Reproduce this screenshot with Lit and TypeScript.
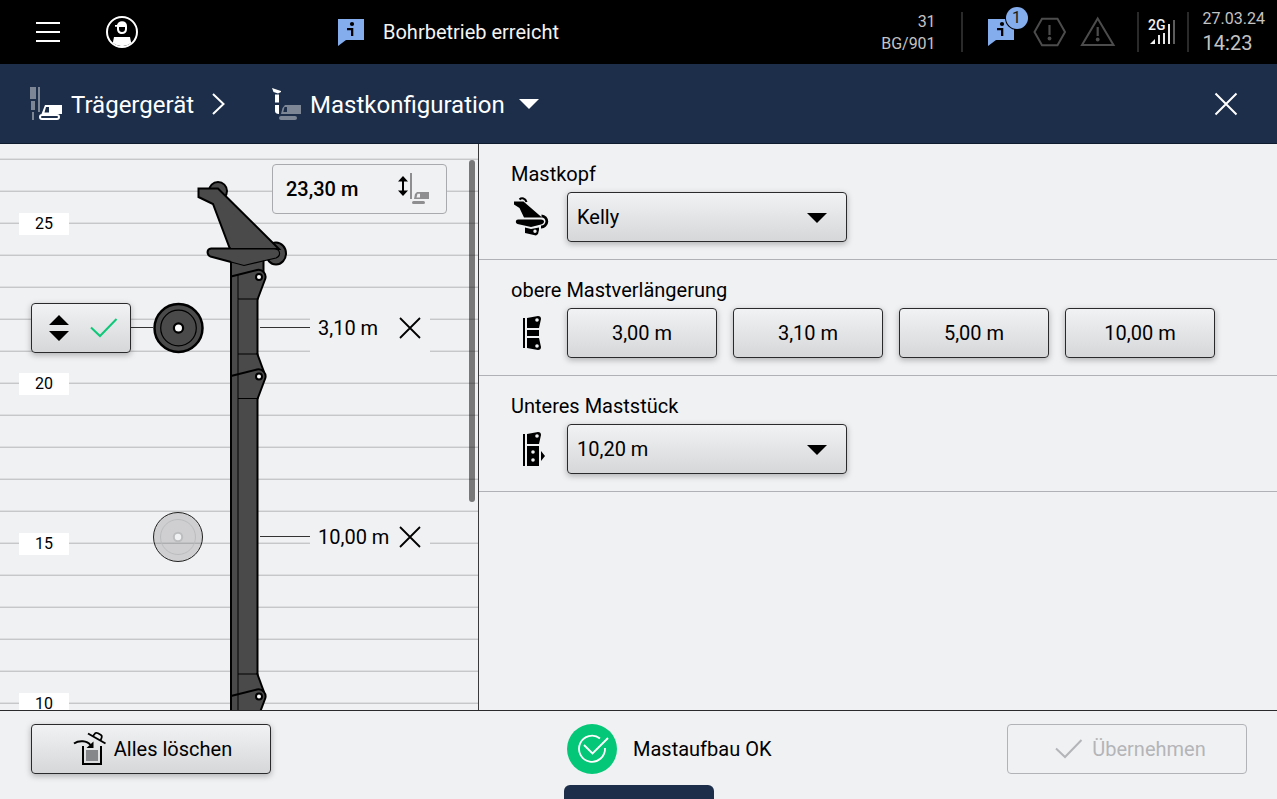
import { LitElement, html, svg, css } from "lit";
import { customElement, property, state } from "lit/decorators.js";

const buttonStyles = css`
  * {
    box-sizing: border-box;
  }
  svg {
    display: block;
    flex: none;
    overflow: visible;
  }
  button,
  select {
    font: inherit;
    color: inherit;
    margin: 0;
    padding: 0;
  }
  .plain {
    background: none;
    border: 0;
    cursor: pointer;
    display: flex;
    align-items: center;
  }
  .key {
    height: 50px;
    border: 1px solid #2a2a2c;
    border-radius: 4px;
    background: linear-gradient(#f1f2f4, #d6d7d9);
    box-shadow: 0 2px 6px rgba(0, 0, 0, 0.28);
    color: #000;
    font-size: 20px;
    cursor: pointer;
  }
`;

/* Status bar across the top of the terminal. */
@customElement("status-bar")
export class StatusBar extends LitElement {
  static styles = [
    buttonStyles,
    css`
      :host {
        display: flex;
        align-items: center;
        height: 64px;
        background: #000;
        color: #f4f4f4;
      }
      .tools {
        display: flex;
        align-items: center;
        gap: 46px;
        flex: 0 0 338px;
        padding-left: 36px;
      }
      .message {
        display: flex;
        align-items: center;
        gap: 19px;
        font-size: 20px;
        flex: 1;
        white-space: nowrap;
      }
      .right {
        display: flex;
        align-items: center;
        color: #c4c4c4;
      }
      .machine {
        font-size: 16px;
        line-height: 22px;
        text-align: right;
        padding: 2px 25px 0 0;
      }
      .rule {
        width: 2px;
        height: 40px;
        background: #2a2a2a;
      }
      .alerts {
        display: flex;
        align-items: center;
        gap: 16px;
        padding: 0 21px 0 25px;
      }
      .info {
        position: relative;
      }
      .badge {
        position: absolute;
        right: -12px;
        top: -12px;
        width: 22px;
        height: 22px;
        border-radius: 11px;
        background: #84adee;
        box-shadow: 0 0 0 1px #000;
        color: #1a1a1a;
        font-size: 16px;
        line-height: 22px;
        text-align: center;
      }
      .signal {
        padding: 0 11px 0 9px;
      }
      .clock {
        padding: 0 12px 0 14px;
        font-size: 16px;
        line-height: 24px;
      }
      .time {
        font-size: 20px;
      }
      .net {
        font-size: 14px;
        font-weight: 500;
      }
    `,
  ];

  private infoShape(fill: string) {
    return svg`
      <path d="M0 0H26V21H8L0 27Z" fill=${fill}/>
      <circle cx="14" cy="5" r="2.1" fill="#000"/>
      <path d="M9 9H15.300V17H13V11.200H9Z" fill="#000"/>`;
  }

  render() {
    return html`
      <div class="tools">
        <button class="plain" aria-label="Menü">
          <svg width="24" height="20" viewBox="0 0 24 20">
            <path d="M0 1H24M0 10H24M0 19H24" stroke="#fff" stroke-width="2" />
          </svg>
        </button>
        <button class="plain" aria-label="Benutzer">
          <svg width="32" height="32" viewBox="0 0 32 32">
            <circle cx="16" cy="16" r="15" fill="none" stroke="#fff" stroke-width="2" />
            <path d="M8 21H24L25.2 27A15 15 0 0 1 6.8 27Z" fill="#fff" />
            <path
              d="M9 9H11C11.5 6.5 13.500 5.200 16 5.200C19 5.200 21 7 21 10V13C21 16.200 19 18 16 18C13 18 11 16 11 13V10.800H9Z"
              fill="#fff"
            />
            <path d="M13 11H19V13C19 15 17.800 16 16 16S13 15 13 13Z" fill="#000" />
          </svg>
        </button>
      </div>
      <div class="message">
        <svg width="26" height="27" viewBox="0 0 26 27">${this.infoShape("#84adee")}</svg>
        <span>Bohrbetrieb erreicht</span>
      </div>
      <div class="right">
        <div class="machine">31<br />BG/901</div>
        <div class="rule"></div>
        <div class="alerts">
          <div class="info">
            <svg width="28" height="27" viewBox="0 0 28 27">${this.infoShape("#84adee")}</svg>
            <span class="badge">1</span>
          </div>
          <svg width="32" height="32" viewBox="1032 16 32 32">
            <path
              d="M1042 18.700H1057.500L1065 32L1057.500 45.300H1042L1034.500 32Z"
              fill="none"
              stroke="#4c4c4c"
              stroke-width="2"
            />
            <path d="M1049.500 25V35" stroke="#4c4c4c" stroke-width="2.200" />
            <circle cx="1049.500" cy="38.500" r="1.900" fill="#4c4c4c" />
          </svg>
          <svg width="36" height="32" viewBox="1080 16 36 32">
            <path d="M1097.700 18.500L1113.500 45H1082Z" fill="none" stroke="#4c4c4c" stroke-width="2" />
            <path d="M1097.700 27V36" stroke="#4c4c4c" stroke-width="2.200" />
            <circle cx="1097.700" cy="39.500" r="1.900" fill="#4c4c4c" />
          </svg>
        </div>
        <div class="rule"></div>
        <div class="signal">
          <svg width="28" height="28" viewBox="1148 18 28 28">
            <text class="net" x="1148" y="30" fill="#f4f4f4">2G</text>
            <path d="M1150 44L1155 39V44Z" fill="#f4f4f4" />
            <path
              d="M1159 44V35M1164 44V33M1169 44V24"
              stroke="#e8e8e8"
              stroke-width="2"
            />
            <path d="M1174 44V20" stroke="#5c5c5c" stroke-width="2" />
          </svg>
        </div>
        <div class="rule"></div>
        <div class="clock">27.03.24<br /><span class="time">14:23</span></div>
      </div>
    `;
  }
}

/* Breadcrumb strip with the current page and the close button. */
@customElement("crumb-bar")
export class CrumbBar extends LitElement {
  static styles = [
    buttonStyles,
    css`
      :host {
        display: flex;
        align-items: center;
        height: 80px;
        padding: 0 40px 0 30px;
        background: #1c2e4a;
        border-bottom: 1px solid #0e1a2e;
        color: #fff;
        font-size: 24px;
      }
      .crumb {
        gap: 9px;
        color: inherit;
        text-decoration: none;
        display: flex;
        align-items: center;
      }
      .crumb span {
        padding-top: 2px;
      }
      .sep {
        margin: 0 47px 0 18px;
      }
      .close {
        margin-left: auto;
      }
      .down {
        margin-left: 5px;
      }
    `,
  ];

  render() {
    return html`
      <a class="crumb" href="#">
        <svg width="32" height="34" viewBox="30 87 32 34">
          <path
            d="M30 87H36V99H30ZM31 101H35V110H31ZM32 112H34V120H32ZM38 87H40V112H38Z"
            fill="#7c8694"
          />
          <path fill-rule="evenodd" d="M45 105H62V114H41.500ZM46 107L44.500 112.500H49V107Z" fill="#fff" />
          <rect x="40" y="115" width="19" height="4" rx="2" fill="none" stroke="#fff" stroke-width="2" />
        </svg>
        <span>Trägergerät</span>
      </a>
      <svg class="sep" width="13" height="22" viewBox="0 0 13 22">
        <path d="M1 1L11.500 11L1 21" fill="none" stroke="#fff" stroke-width="2" />
      </svg>
      <button class="plain crumb">
        <svg width="29" height="34" viewBox="272 86 29 34">
          <path d="M272 87L281 90V91L278 92.500L273.500 91ZM275 93.500H279V101.500H275ZM275 104H279V113C276.500 113 275 112 275 110Z" fill="#fff" />
          <path fill-rule="evenodd" d="M285 104H301V113H281L282.500 107ZM284.500 106L283.300 111H287V106Z" fill="#7c8694" />
          <rect x="279" y="115" width="18" height="4" rx="2" fill="#7c8694" />
        </svg>
        <span>Mastkonfiguration</span>
        <svg class="down" width="20" height="10" viewBox="0 0 20 10">
          <path d="M0 0H20L10 10Z" fill="#fff" />
        </svg>
      </button>
      <button class="plain close" aria-label="Schließen">
        <svg width="22" height="22" viewBox="0 0 22 22">
          <path d="M0.500 0.500L21.500 21.500M21.500 0.500L0.500 21.500" stroke="#fff" stroke-width="2" />
        </svg>
      </button>
    `;
  }
}

interface Segment {
  label: string;
  y: number;
}

/* Drawing of the mast over a metre scale: 32 px stand for one metre. */
@customElement("mast-view")
export class MastView extends LitElement {
  static styles = [
    buttonStyles,
    css`
      :host {
        display: block;
        position: relative;
        overflow: hidden;
        border-right: 1px solid #3a3a3c;
        background: repeating-linear-gradient(
          #f0f1f3 0 14px,
          #dedfe1 14px 15px,
          #c6c7c9 15px 16px,
          #f0f1f3 16px 32px
        );
        font-size: 20px;
      }
      .mark {
        position: absolute;
        left: 19px;
        width: 50px;
        height: 22px;
        background: #fff;
        font-size: 16px;
        line-height: 22px;
        text-align: center;
      }
      .drawing {
        position: absolute;
        left: 0;
        top: 0;
      }
      .segment {
        position: absolute;
        left: 310px;
        width: 120px;
        height: 50px;
        padding: 0 9px 0 8px;
        display: flex;
        align-items: center;
        justify-content: space-between;
        background: #f0f1f3;
        white-space: nowrap;
      }
      .total {
        position: absolute;
        left: 272px;
        top: 20px;
        width: 175px;
        height: 50px;
        padding: 0 16px 0 13px;
        display: flex;
        align-items: center;
        justify-content: space-between;
        border: 1px solid #a9aaad;
        border-radius: 4px;
        background: #f0f1f3;
        font-weight: 500;
      }
      .move {
        position: absolute;
        left: 31px;
        top: 159px;
        width: 100px;
        display: flex;
        align-items: center;
        justify-content: space-between;
        padding: 0 12px 0 17px;
      }
      .thumb {
        position: absolute;
        right: 3px;
        top: 16px;
        width: 6px;
        height: 342px;
        border-radius: 3px;
        background: rgba(0, 0, 0, 0.5);
      }
    `,
  ];

  @property({ attribute: false }) segments: Segment[] = [
    { label: "3,10 m", y: 159 },
    { label: "10,00 m", y: 368 },
  ];

  private marks = [25, 20, 15, 10];

  private joint(y: number) {
    return svg`
      <path d="M232 ${y} L257 ${y - 6.500} A7 7 0 0 1 265 ${y + 3} L257 ${y + 23} H232 Z" fill="#4a4a4a"/>
      <path d="M231 ${y} L257 ${y - 6.500} A7 7 0 0 1 265 ${y + 3} L257.500 ${y + 23}"
        fill="none" stroke="#000" stroke-width="2" stroke-linejoin="round"/>
      <path d="M238 ${y - 1.500}V${y + 23}M238 ${y + 22.500}H257" stroke="#000" stroke-width="1"/>
      <circle cx="259" cy=${y + 0.500} r="3" fill="#fff" stroke="#000" stroke-width="2"/>`;
  }

  private flare(y: number) {
    return svg`
      <path d="M257 ${y - 22} L263.500 ${y - 5} L265 ${y + 2} H232 V${y - 22}Z" fill="#4a4a4a"/>
      <path d="M257 ${y - 23} L264 ${y - 4}" stroke="#000" stroke-width="2"/>
      <path d="M238 ${y - 22}H257M238 ${y - 22}V${y}" stroke="#000" stroke-width="1"/>`;
  }

  render() {
    return html`
      ${this.marks.map(
        (m) => html`<span class="mark" style="top:${69 + (25 - m) * 32}px">${m}</span>`
      )}
      <svg class="drawing" width="478" height="656" viewBox="0 144 478 656">
        <path d="M231 258H263.500V275L231 282Z" fill="#4a4a4a" stroke="#000" stroke-width="2" />
        <rect x="231" y="276" width="26.500" height="534" fill="#4a4a4a" />
        <path d="M231 276V810M257.500 298V810" stroke="#000" stroke-width="2" />
        <path d="M238 280V800" stroke="#000" stroke-width="1" />
        ${this.joint(276.5)} ${this.flare(376)} ${this.joint(376)} ${this.flare(696)}
        ${this.joint(696)}
        <circle cx="218" cy="191" r="9" fill="#4a4a4a" stroke="#000" stroke-width="2" />
        <ellipse cx="276" cy="253.500" rx="10" ry="11" fill="#4a4a4a" stroke="#000" stroke-width="2" />
        <path
          d="M198.500 188.500H218L279 249H230L213 204L198.500 197Z"
          fill="#4a4a4a"
          stroke="#000"
          stroke-width="2"
        />
        <path
          d="M211 249H274C281 249 281 256 276 258L244 265L210.500 256.500C206.500 255 206.500 249 211 248.500Z"
          fill="#4a4a4a"
        />
        <path
          d="M211 248.500C206.500 249 206.500 255 210.500 256.500L231 262M231 248.500H211"
          fill="none"
          stroke="#000"
          stroke-width="2"
        />
        <path
          d="M231 249H274C281 249 281 256 276 258L244 265.500L231 262"
          fill="none"
          stroke="#000"
          stroke-width="1.200"
        />
        <path d="M131 327.500H153M260 327.500H310M260 536.500H310" stroke="#333" stroke-width="1.200" />
        <circle cx="178.500" cy="328" r="24" fill="#4a4a4a" stroke="#000" stroke-width="2.500" />
        <circle cx="178.500" cy="328" r="17.800" fill="none" stroke="#000" stroke-width="1.200" />
        <circle cx="178.500" cy="328" r="4.600" fill="#fff" stroke="#000" stroke-width="2.200" />
        <circle cx="178" cy="537" r="24.500" fill="rgba(74,74,74,.2)" stroke="#222" stroke-width="1" />
        <circle cx="178" cy="537" r="17.500" fill="none" stroke="#bcbdbf" stroke-width="1" />
        <circle cx="178" cy="537" r="4.200" fill="#f0f1f3" stroke="#bcbdbf" stroke-width="2" />
      </svg>
      ${this.segments.map(
        (s) => html`<div class="segment" style="top:${s.y}px">
          <span>${s.label}</span>
          <button class="plain" aria-label="${s.label} entfernen">
            <svg width="22" height="22" viewBox="0 0 22 22">
              <path d="M1 1L21 21M21 1L1 21" stroke="#000" stroke-width="1.800" />
            </svg>
          </button>
        </div>`
      )}
      <div class="total">
        <span>23,30 m</span>
        <svg width="32" height="32" viewBox="398 173 32 32">
          <path
            d="M403 176L408 181.500H404V190.500H408L403 196L398 190.500H402V181.500H398Z"
            fill="#000"
          />
          <path d="M410 173H412V199H410Z" fill="#8e8e90" />
          <path fill-rule="evenodd" d="M417 192H429V199H414L415 194ZM417.500 193.700L416.500 197.500H420V193.700Z" fill="#8e8e90" />
          <rect x="412" y="201" width="13" height="3" rx="1.500" fill="#8e8e90" />
        </svg>
      </div>
      <button class="key move" aria-label="Rolle verschieben">
        <svg width="20" height="26" viewBox="0 0 20 26">
          <path d="M0 10L10 0L20 10ZM0 16H20L10 26Z" fill="#000" />
        </svg>
        <svg width="28" height="20" viewBox="0 0 28 20">
          <path d="M1 9.500L10 18L26.500 1" fill="none" stroke="#0cc878" stroke-width="2" />
        </svg>
      </button>
      <div class="thumb"></div>
    `;
  }
}

/* Choice of mast head, extensions and lower mast section. */
@customElement("mast-form")
export class MastForm extends LitElement {
  static styles = [
    buttonStyles,
    css`
      :host {
        display: block;
        font-size: 20px;
      }
      .part {
        padding: 18px 32px 17px;
        border-bottom: 1px solid #b0b1b7;
      }
      .name {
        display: block;
        line-height: 24px;
        margin-bottom: 6px;
      }
      .row {
        display: flex;
        align-items: center;
        gap: 16px;
      }
      .row .key {
        width: 150px;
      }
      .pick {
        position: relative;
      }
      .pick .key {
        width: 280px;
        padding-left: 9px;
        appearance: none;
      }
      .arrow {
        position: absolute;
        right: 20px;
        top: 21px;
        pointer-events: none;
      }
    `,
  ];

  private pick(id: string, value: string) {
    return html`<div class="pick">
      <select class="key" id=${id}>
        <option>${value}</option>
      </select>
      <svg class="arrow" width="20" height="10" viewBox="0 0 20 10">
        <path d="M0 0H20L10 10Z" fill="#000" />
      </svg>
    </div>`;
  }

  private lengths = ["3,00 m", "3,10 m", "5,00 m", "10,00 m"];

  render() {
    return html`
      <section class="part">
        <label class="name" for="head">Mastkopf</label>
        <div class="row">
          <svg width="40" height="40" viewBox="511 197 40 40">
            <path d="M514 201.500H523.500L542 217.500H524L519.500 208L514 204.500Z" fill="#000" />
            <path d="M519.500 199.500C521.500 197.500 525.500 198 526.500 202" fill="none" stroke="#000" stroke-width="2" />
            <path d="M518 219.500H541C545 219.500 545 223.500 541 224.500L531 227L517.500 224C515 223 515.500 219.500 518 219.500Z" fill="#000" />
            <path d="M541.500 215.800A5.600 5.600 0 0 1 541 227" fill="none" stroke="#000" stroke-width="2.800" />
            <path
              fill-rule="evenodd"
              d="M525 227.500L531 229L539 227.500V230L538 234L536 235.500L525 233ZM535 229.500A1.700 1.700 0 1 0 535 232.900A1.700 1.700 0 1 0 535 229.500Z"
              fill="#000"
            />
          </svg>
          ${this.pick("head", "Kelly")}
        </div>
      </section>
      <section class="part" role="group" aria-labelledby="ext">
        <span class="name" id="ext">obere Mastverlängerung</span>
        <div class="row">
          <svg width="40" height="40" viewBox="511 313 40 40">
            <path
              d="M523 318H525V348H523ZM527 318L538 316Q541 316 541 319L539 328H527ZM527 330H539V336H527ZM527 338H539L541 347Q541 350 538 350L527 348Z"
              fill="#000"
            />
            <circle cx="537" cy="320" r="1.800" fill="#f0f1f3" />
            <circle cx="537" cy="346" r="1.800" fill="#f0f1f3" />
          </svg>
          ${this.lengths.map((l) => html`<button class="key">${l}</button>`)}
        </div>
      </section>
      <section class="part">
        <label class="name" for="lower">Unteres Maststück</label>
        <div class="row">
          <svg width="40" height="40" viewBox="511 429 40 40">
            <path
              d="M523 434H525V466H523ZM527 434L538 432Q541 432 541 435L539 444H527ZM527 446H539V466H527ZM541 451L545 456L541 461Z"
              fill="#000"
            />
            <circle cx="537" cy="436" r="1.800" fill="#f0f1f3" />
            <circle cx="533" cy="452" r="1.800" fill="#f0f1f3" />
            <circle cx="533" cy="460" r="1.800" fill="#f0f1f3" />
          </svg>
          ${this.pick("lower", "10,20 m")}
        </div>
      </section>
    `;
  }
}

@customElement("app-root")
export class AppRoot extends LitElement {
  static styles = [
    buttonStyles,
    css`
      :host {
        display: flex;
        flex-direction: column;
        height: 100vh;
        overflow: hidden;
        background: #f0f1f3;
        color: #000;
        font-family: Roboto, "Liberation Sans", sans-serif;
      }
      status-bar,
      crumb-bar {
        flex: none;
        box-sizing: border-box;
      }
      .body {
        flex: 1;
        min-height: 0;
        display: grid;
        grid-template-columns: 479px 1fr;
      }
      mast-view {
        box-sizing: border-box;
      }
      .foot {
        position: relative;
        display: grid;
        grid-template-columns: 536px 1fr 240px;
        align-items: start;
        height: 89px;
        padding: 13px 30px 0 31px;
        border-top: 1px solid #2a2a2c;
        font-size: 20px;
      }
      .wide {
        width: 240px;
        display: flex;
        align-items: center;
        justify-content: center;
        gap: 8px;
      }
      .wide:disabled {
        background: none;
        box-shadow: none;
        border-color: #b2b3b6;
        color: #b4b5b8;
        cursor: default;
      }
      .state {
        display: flex;
        align-items: center;
        gap: 16px;
      }
      .tab {
        position: absolute;
        left: 50%;
        bottom: 0;
        width: 150px;
        height: 14px;
        margin-left: -75px;
        border: 0;
        border-radius: 6px 6px 0 0;
        background: #1c2e4a;
      }
    `,
  ];

  @state() private complete = false;

  render() {
    return html`
      <status-bar></status-bar>
      <crumb-bar></crumb-bar>
      <main class="body">
        <mast-view></mast-view>
        <mast-form></mast-form>
      </main>
      <footer class="foot">
        <button class="key wide">
          <svg width="36" height="36" viewBox="70 731 36 36">
            <path d="M83 746V764H101V746" fill="none" stroke="#000" stroke-width="2" />
            <path d="M86 750H98V761H86Z" fill="#86878a" />
            <path d="M88 733.500L105.500 743.500" stroke="#000" stroke-width="2" />
            <path
              d="M93 736L95.500 733Q96.500 732.500 98 733.200L101 735Q102.300 736 101.700 737.500L100.500 740.500"
              fill="none"
              stroke="#000"
              stroke-width="1.800"
            />
            <path d="M74 743.500C79 740 87 740.500 90.500 745" fill="none" stroke="#000" stroke-width="2" />
            <path d="M93.500 741.500V748H86.500Z" fill="#000" />
          </svg>
          <span>Alles löschen</span>
        </button>
        <div class="state" role="status">
          <svg width="50" height="50" viewBox="567 724 50 50">
            <circle cx="592" cy="749" r="25" fill="#04c877" />
            <path
              d="M600 738.500A13 13 0 1 0 605 748"
              fill="none"
              stroke="#fff"
              stroke-width="1.800"
            />
            <path d="M584 745L592.500 753.500L608 738" fill="none" stroke="#fff" stroke-width="1.800" />
          </svg>
          <span>Mastaufbau OK</span>
        </div>
        <button class="key wide" ?disabled=${!this.complete}>
          <svg width="36" height="20" viewBox="-7 0 36 20">
            <path d="M1 9.500L10 18L26.500 1" fill="none" stroke="currentColor" stroke-width="2" />
          </svg>
          <span>Übernehmen</span>
        </button>
        <button class="tab" aria-label="Leiste öffnen"></button>
      </footer>
    `;
  }
}
